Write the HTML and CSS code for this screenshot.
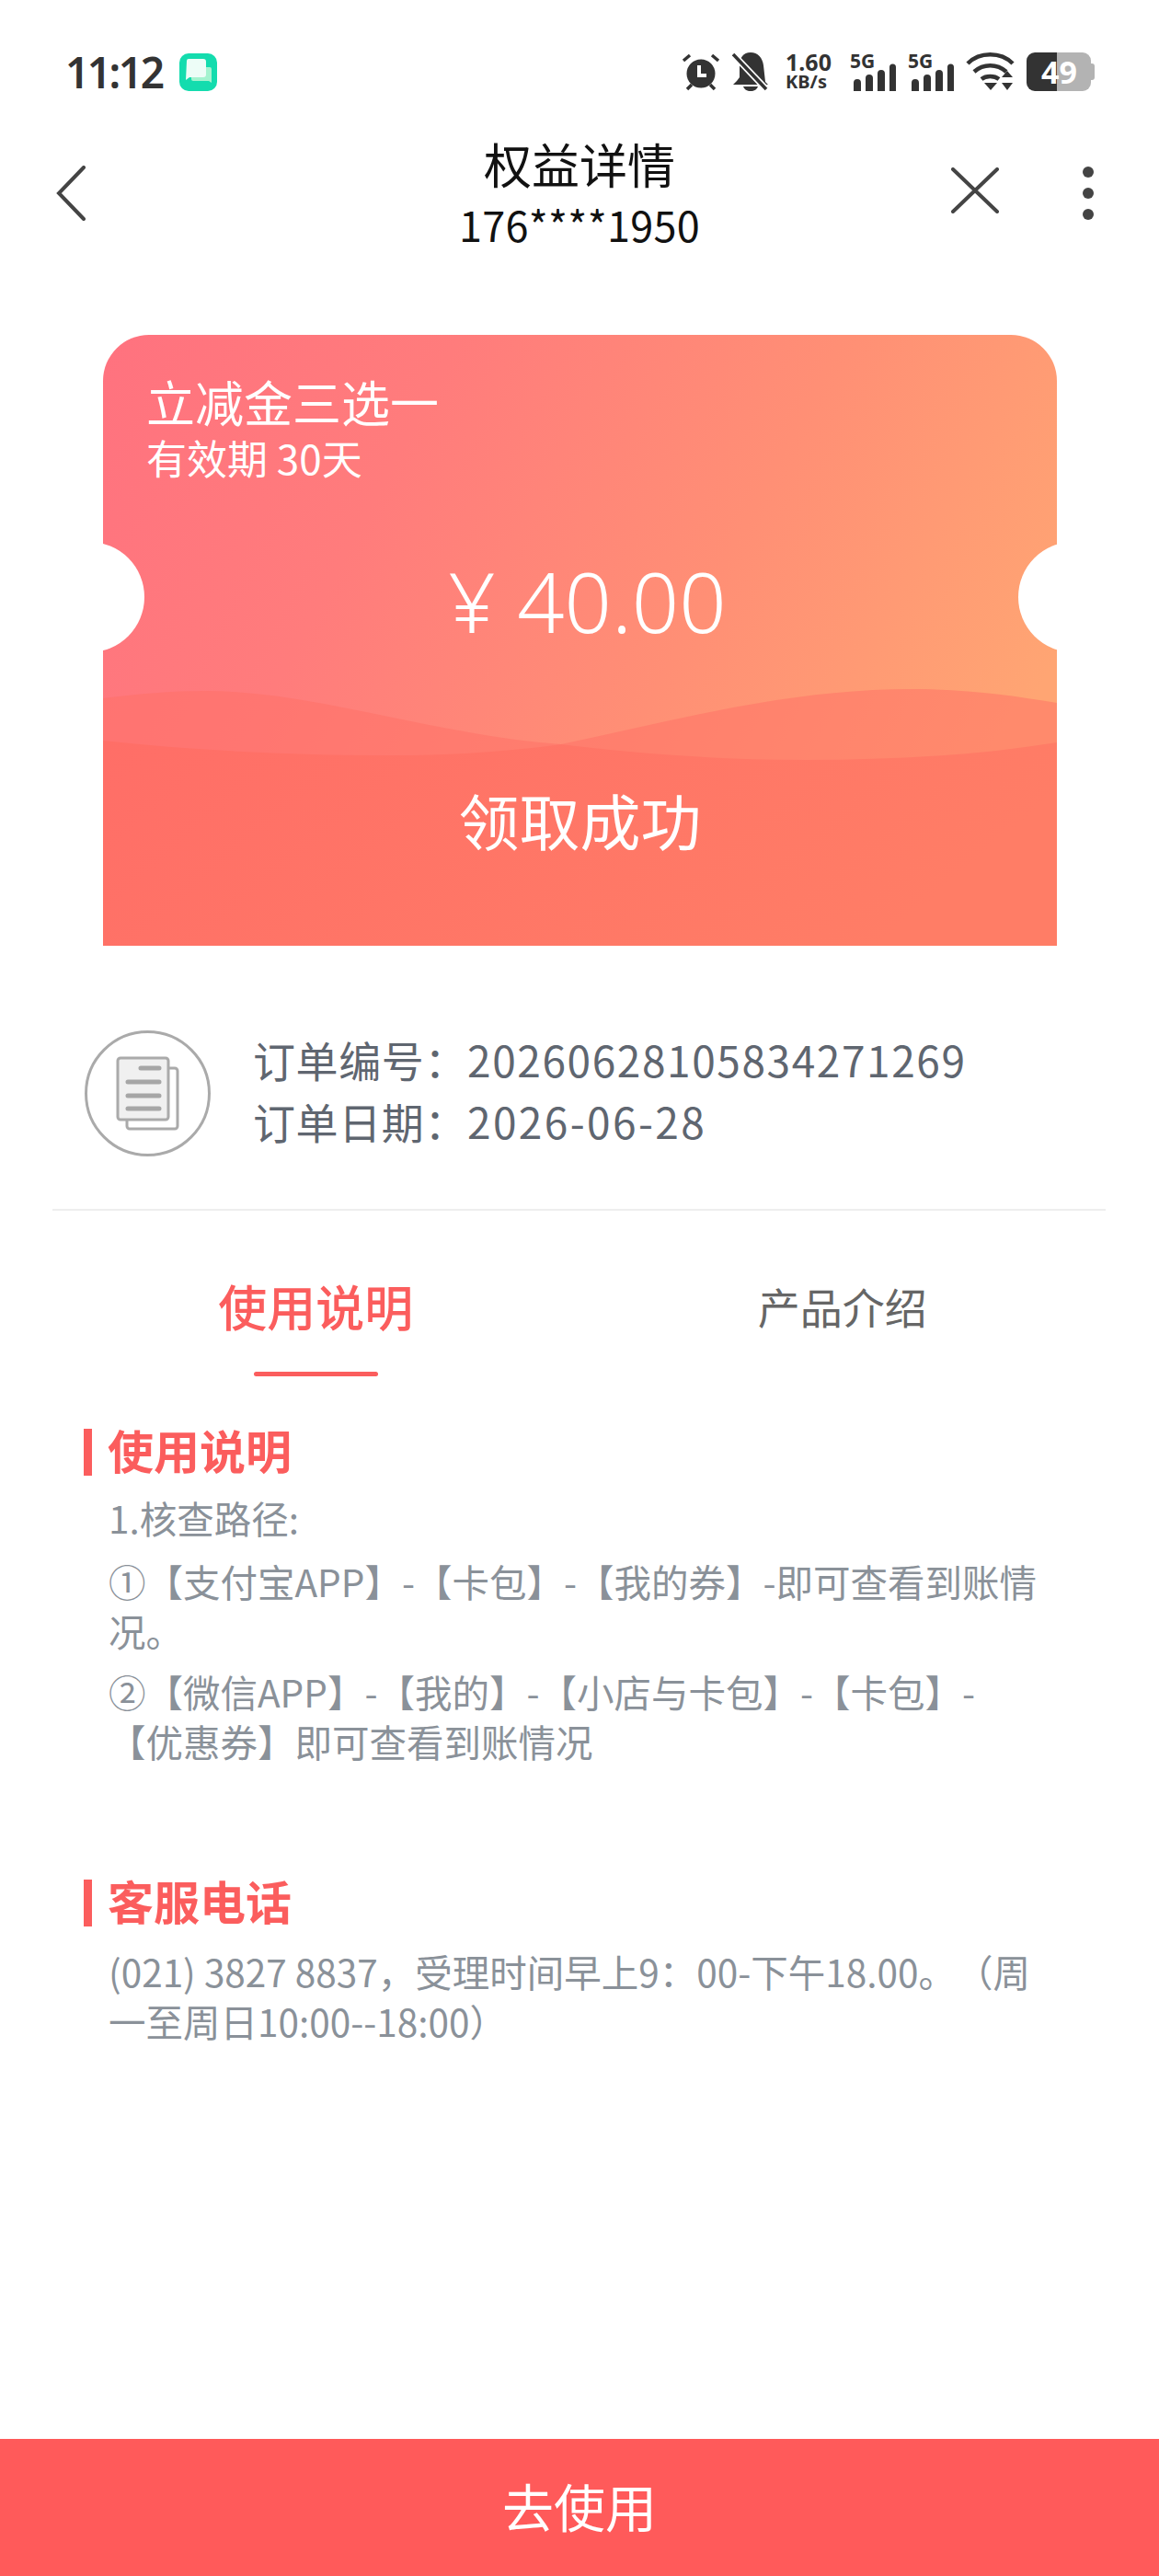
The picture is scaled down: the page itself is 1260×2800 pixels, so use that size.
FILE: index.html
```html
<!DOCTYPE html>
<html lang="zh-CN">
<head>
  <meta charset="UTF-8" />
  <meta name="viewport" content="width=device-width, initial-scale=1.0"/>
  <title>权益详情</title>
  <link rel="stylesheet" href="styles.css">
</head>
<body>
<div class="page">

  <div class="status">
    <div class="status-left">
      <span class="time">11:12</span>
      <svg class="app-icon" viewBox="0 0 41 41">
        <rect width="41" height="41" rx="10" fill="#14dcae"/>
        <path d="M13 15h20a2 2 0 0 1 2 2v15l-3-2H15a2 2 0 0 1-2-2z" fill="#a4f3cf"/>
        <path d="M8 8a2 2 0 0 1 2-2h16a3 3 0 0 1 3 3v14a3 3 0 0 1-3 3H11l-4 3z" fill="#edfdf7"/>
      </svg>
    </div>
    <div class="status-right">
      <svg class="st-alarm" viewBox="0 0 42 42">
        <circle cx="21" cy="23" r="15.5" fill="#333"/>
        <path d="M19 14v11h8" fill="none" stroke="#fff" stroke-width="4"/>
        <path d="M2 9l7-6M40 9l-7-6M6 40l5-5M36 40l-5-5" stroke="#333" stroke-width="3.5" fill="none"/>
      </svg>
      <svg class="st-bell" viewBox="0 0 40 42">
        <path d="M20 0c8 0 13 6 14 14l2 18 3 3H1l4-4 3-4V14C8 6 12 0 20 0z" fill="#333"/>
        <path d="M12 37h16c-1 3-4 5-8 5s-7-2-8-5z" fill="#333"/>
        <path d="M1 2l36 38" stroke="#fff" stroke-width="7"/>
        <path d="M1 2l36 38" stroke="#333" stroke-width="3.6"/>
      </svg>
      <div class="speed"><span>1.60</span><span class="speed-unit">KB/s</span></div>
      <div class="signal">
        <svg viewBox="0 0 50 42"><path d="M4 33a3 3 0 0 1 8 0v9H4zM17 28a3 3 0 0 1 8 0v14h-8zM30 23a3 3 0 0 1 8 0v19h-8zM43 16a3 3 0 0 1 7 0v26h-7z" fill="#333"/></svg>
        <span class="signal-label">5G</span>
      </div>
      <div class="signal">
        <svg viewBox="0 0 50 42"><path d="M4 33a3 3 0 0 1 8 0v9H4zM17 28a3 3 0 0 1 8 0v14h-8zM30 23a3 3 0 0 1 8 0v19h-8zM43 16a3 3 0 0 1 7 0v26h-7z" fill="#333"/></svg>
        <span class="signal-label">5G</span>
      </div>
      <svg class="st-wifi" viewBox="0 0 53 42">
        <path d="M2 12C15 -1 38 -1 51 12M9 21c10-9 25-9 35 0M17 29c5-4 14-4 19 0" fill="none" stroke="#333" stroke-width="4.5"/>
        <path d="M20 33h14l-7 8zM39 27l6-7 6 7zM39 33h12l-6 8z" fill="#333"/>
      </svg>
      <div class="battery">49</div>
    </div>
  </div>

  <div class="nav">
    <svg class="nav-back" viewBox="0 0 32 60"><path d="M30 2L3 30l27 28" fill="none" stroke="#444" stroke-width="4" stroke-linecap="round"/></svg>
    <div class="nav-title">
      <div class="nav-name">权益详情</div>
      <div class="nav-phone">176****1950</div>
    </div>
    <div class="nav-actions">
      <svg class="nav-close" viewBox="0 0 52 50"><path d="M2 2l48 46M50 2L2 48" fill="none" stroke="#444" stroke-width="4" stroke-linecap="round"/></svg>
      <div class="dots"><i></i><i></i><i></i></div>
    </div>
  </div>

  <div class="card">
    <svg class="card-waves" viewBox="0 0 1037 664" preserveAspectRatio="none">
      <defs>
        <linearGradient id="waveFront" x1="0" y1="0" x2="1" y2="0.25">
          <stop offset="0" stop-color="#ff6e67"/>
          <stop offset="1" stop-color="#ff7d66"/>
        </linearGradient>
      </defs>
      <path d="M0 395C40 390 75 387 110 387C230 387 360 435 498 445C620 420 740 385 880 385C940 385 990 392 1037 400V664H0z" fill="#ff6f66" opacity=".5"/>
      <path d="M0 441C100 452 210 457 312 457C380 457 440 453 498 445C580 455 670 462 765 462C860 462 950 457 1037 443V664H0z" fill="url(#waveFront)"/>
    </svg>
    <i class="notch notch-left"></i>
    <i class="notch notch-right"></i>
    <div class="card-title">立减金三选一</div>
    <div class="card-sub">有效期 30天</div>
    <div class="card-amount">¥ 40.00</div>
    <div class="card-state">领取成功</div>
  </div>

  <div class="order">
    <svg class="order-icon" viewBox="0 0 137 137">
      <circle cx="68.5" cy="68.5" r="67" fill="#fff" stroke="#aaa" stroke-width="3"/>
      <rect x="46" y="41" width="55" height="66" rx="3" fill="#fff" stroke="#aaa" stroke-width="3"/>
      <rect x="36" y="30" width="55" height="67" rx="3" fill="#f0f0f0" stroke="#aaa" stroke-width="3"/>
      <path d="M61 41h20M47 56h34M47 71h34M47 85h34" stroke="#a6a6a6" stroke-width="5" stroke-linecap="round"/>
    </svg>
    <div class="order-text">
      <div class="order-line"><span class="order-label">订单编号：</span><span class="order-val">20260628105834271269</span></div>
      <div class="order-line"><span class="order-label">订单日期：</span><span class="order-val order-date">2026-06-28</span></div>
    </div>
  </div>

  <div class="tabs">
    <div class="tab active">使用说明<i class="tab-line"></i></div>
    <div class="tab">产品介绍<i class="tab-line"></i></div>
  </div>

  <div class="section">
    <div class="section-title">使用说明</div>
    <div class="section-body">
      <p>1.核查路径:</p>
      <p>①【支付宝APP】-【卡包】-【我的券】-即可查看到账情况。</p>
      <p>②【微信APP】-【我的】-【小店与卡包】-【卡包】-<br>【优惠券】即可查看到账情况</p>
    </div>
  </div>

  <div class="section section-second">
    <div class="section-title">客服电话</div>
    <div class="section-body section-body-tight">
      <p>(021) 3827 8837，受理时间早上9：00-下午18.00。（周<br>一至周日10:00--18:00）</p>
    </div>
  </div>

  <div class="use-btn">去使用</div>

</div>
</body>
</html>
```

FILE: styles.css
```css
* {
  box-sizing: border-box;
}

body {
  margin: 0;
  background: #fff;
  font-family: "Noto Sans CJK SC", "Noto Sans", sans-serif;
}

.page {
  display: flex;
  flex-direction: column;
  width: 1260px;
  height: 2800px;
  overflow: hidden;
}

/* status bar */
.status {
  display: flex;
  justify-content: space-between;
  height: 99px;
  padding: 57px 70px 0 71px;
}

.status-left {
  display: flex;
  align-items: center;
  gap: 20px;
}

.time {
  width: 104px;
  font-family: "Noto Sans", sans-serif;
  font-size: 46px;
  font-weight: 600;
  line-height: 42px;
  letter-spacing: -2.5px;
  color: #333;
}

.app-icon {
  width: 41px;
  height: 41px;
}

.status-right {
  display: flex;
  align-items: center;
  gap: 13px;
}

.st-alarm {
  width: 42px;
  height: 42px;
}

.st-bell {
  width: 40px;
  height: 42px;
  margin-right: 5px;
}

.speed {
  display: flex;
  flex-direction: column;
  width: 50px;
  margin-right: 7px;
  font-family: "Noto Sans", sans-serif;
  font-size: 25px;
  font-weight: 700;
  line-height: 22px;
  color: #333;
}

.speed-unit {
  font-size: 20px;
}

.signal {
  position: relative;
  width: 50px;
  height: 42px;
}

.signal svg {
  display: block;
  width: 50px;
  height: 42px;
}

.signal-label {
  position: absolute;
  left: 0;
  top: -2px;
  font-family: "Noto Sans", sans-serif;
  font-size: 21px;
  font-weight: 700;
  line-height: 22px;
  color: #333;
}

.st-wifi {
  width: 53px;
  height: 42px;
}

.battery {
  position: relative;
  width: 70px;
  height: 42px;
  margin-right: 4px;
  border-radius: 9px;
  background: linear-gradient(90deg, #333 47%, #b3b3b3 47%);
  padding-left: 16px;
  font-family: "Noto Sans", sans-serif;
  font-size: 34px;
  font-weight: 700;
  line-height: 42px;
  color: #fff;
}

.battery::after {
  content: "";
  position: absolute;
  right: -4px;
  top: 12px;
  width: 4px;
  height: 18px;
  border-radius: 0 3px 3px 0;
  background: #b3b3b3;
}

/* title bar */
.nav {
  display: grid;
  grid-template-columns: 1fr auto 1fr;
  margin-top: 48px;
  padding: 0 71px;
}

.nav-back {
  width: 32px;
  height: 60px;
  margin: 33px 0 0 -10px;
}

.nav-title {
  text-align: center;
  color: #111;
}

.nav-name {
  font-size: 52px;
  line-height: 62px;
}

.nav-phone {
  font-size: 45px;
  line-height: 70px;
  letter-spacing: .3px;
}

.nav-actions {
  display: flex;
  justify-content: flex-end;
  align-items: flex-start;
  gap: 91px;
  margin-top: 35px;
}

.nav-close {
  width: 52px;
  height: 50px;
}

.dots {
  display: flex;
  flex-direction: column;
  gap: 11px;
  margin-top: -1px;
}

.dots i {
  display: block;
  width: 12px;
  height: 12px;
  border-radius: 50%;
  background: #444;
}

/* coupon card */
.card {
  position: relative;
  width: 1037px;
  height: 664px;
  margin: 85px 0 0 112px;
  overflow: hidden;
  border-radius: 50px 50px 0 0;
  background: linear-gradient(118deg, #ff727f 0%, #ff7c7c 28%, #ff8f75 58%, #ffa573 88%);
  color: #fff;
  text-align: center;
}

.card-waves {
  position: absolute;
  left: 0;
  top: 0;
  width: 100%;
  height: 100%;
}

.notch {
  position: absolute;
  top: 225px;
  width: 120px;
  height: 120px;
  border-radius: 50%;
  background: #fff;
}

.notch-left {
  left: -75px;
}

.notch-right {
  right: -78px;
}

.card-title,
.card-sub,
.card-amount,
.card-state {
  position: relative;
}

.card-title {
  margin-top: 40px;
  padding-left: 47px;
  font-size: 53px;
  line-height: 64px;
  text-align: left;
}

.card-sub {
  margin-top: 2px;
  padding-left: 47px;
  font-size: 44px;
  line-height: 54px;
  text-align: left;
}

.card-amount {
  margin-top: 74px;
  padding-left: 16px;
  font-family: "Noto Sans", sans-serif;
  font-size: 90px;
  font-weight: 350;
  line-height: 110px;
}

.card-state {
  margin-top: 142px;
  font-size: 66px;
  line-height: 80px;
}

/* order info */
.order {
  display: flex;
  align-items: center;
  gap: 46px;
  margin: 92px 0 57px 92px;
}

.order-icon {
  width: 137px;
  height: 137px;
}

.order-text {
  margin-top: -7px;
}

.order-line {
  font-size: 46px;
  line-height: 67px;
  color: #5f6670;
}

.order-label {
  letter-spacing: .6px;
}

.order-val {
  letter-spacing: 1.6px;
}

.order-date {
  letter-spacing: 2.4px;
}

/* tabs */
.tabs {
  display: grid;
  grid-template-columns: 1fr 1fr;
  margin: 0 58px 0 57px;
  border-top: 2px solid #eeeeee;
  padding-top: 68px;
}

.tab {
  display: flex;
  flex-direction: column;
  align-items: center;
  font-size: 46px;
  line-height: 70px;
  color: #666;
}

.tab-line {
  display: block;
  width: 135px;
  height: 5px;
  margin-top: 37px;
  border-radius: 3px;
}

.tab.active {
  font-size: 53px;
  font-weight: 500;
  color: #fb5d5d;
}

.tab.active .tab-line {
  background: #fb5d5d;
}

/* text sections */
.section {
  margin: 57px 0 0 91px;
}

.section-second {
  margin-top: 111px;
}

.section-title {
  display: flex;
  align-items: center;
  height: 51px;
  border-left: 9px solid #fb5d5d;
  padding: 0 0 8px 17px;
  font-size: 50px;
  font-weight: 700;
  line-height: 44px;
  color: #fb5d5d;
}

.section-body {
  width: 1049px;
  margin-top: 19px;
  padding-left: 27px;
  font-size: 40.5px;
  line-height: 54px;
  color: #8a9199;
  text-spacing-trim: space-all;
}

.section-body-tight {
  margin-top: 22px;
}

.section-body p {
  margin: 0 0 12px;
}

.section-body p:first-child {
  margin-bottom: 15px;
}

/* bottom button */
.use-btn {
  margin-top: auto;
  height: 149px;
  background: #ff5a5a;
  font-size: 56px;
  line-height: 144px;
  text-align: center;
  color: #fff;
}
```
